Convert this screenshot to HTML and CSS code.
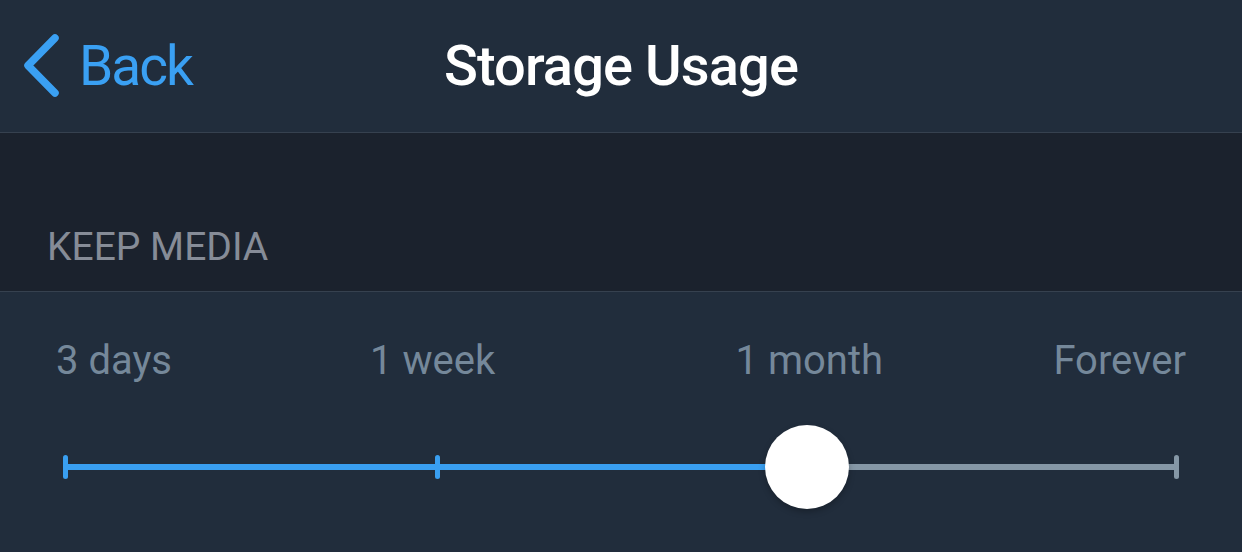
FILE: index.html
```html
<!DOCTYPE html>
<html>
<head>
<meta charset="utf-8">
<title>Storage Usage</title>
<link rel="stylesheet" href="styles.css">
</head>
<body>
<div class="screen">
  <header class="navbar">
    <a class="back" href="#">
      <svg class="chevron" width="40" height="66" viewBox="0 0 40 66" aria-hidden="true">
        <path d="M34 5 L7 32.5 L34 60" fill="none" stroke="#3aa0f3" stroke-width="7.5" stroke-linecap="round" stroke-linejoin="round"/>
      </svg>
      <span class="back-label">Back</span>
    </a>
    <h1 class="title">Storage Usage</h1>
    <div class="nav-right"></div>
  </header>
  <section class="section-header">
    <span class="section-title">KEEP MEDIA</span>
  </section>
  <section class="slider-cell">
    <div class="labels">
      <div class="label first"><span>3 days</span></div>
      <div class="label"><span>1 week</span></div>
      <div class="label"><span>1 month</span></div>
      <div class="label last"><span>Forever</span></div>
    </div>
    <div class="track">
      <span class="tick on"></span>
      <span class="seg on"></span>
      <span class="tick on"></span>
      <span class="seg on"></span>
      <span class="knob"><span class="thumb"></span></span>
      <span class="seg off"></span>
      <span class="tick off"></span>
    </div>
  </section>
</div>
</body>
</html>
```
FILE: styles.css
```css
* { box-sizing: border-box; }
html, body {
  margin: 0;
  padding: 0;
  background: #212d3c;
}
body {
  font-family: Roboto, "Noto Sans", "DejaVu Sans", sans-serif;
  width: 1242px;
  height: 552px;
  overflow: hidden;
}
.screen {
  display: flex;
  flex-direction: column;
  height: 552px;
}
.navbar {
  height: 133px;
  flex: none;
  display: grid;
  grid-template-columns: 1fr auto 1fr;
  align-items: center;
  background: #212d3c;
  border-bottom: 1px solid #36414f;
  padding-bottom: 1px;
}
.back {
  display: flex;
  align-items: center;
  gap: 18px;
  padding-left: 21px;
  text-decoration: none;
  color: #3aa0f3;
}
.chevron { display: block; }
.back-label {
  font-size: 55px;
  line-height: 64px;
  font-weight: 400;
  letter-spacing: -2px;
}
.title {
  margin: 0;
  font-size: 56px;
  line-height: 64px;
  font-weight: 500;
  color: #ffffff;
  letter-spacing: -0.9px;
}
.section-header {
  height: 159px;
  flex: none;
  background: #1b222d;
  border-bottom: 1px solid #36414f;
  display: flex;
  align-items: flex-end;
  padding: 0 0 20px 47px;
}
.section-title {
  font-size: 39px;
  line-height: 48px;
  color: #868c97;
}
.slider-cell {
  flex: 1;
  background: #212d3c;
  padding: 40px 63px 0 63px;
  display: flex;
  flex-direction: column;
}
.labels {
  display: flex;
  justify-content: space-between;
  padding: 0 2px;
  height: 56px;
  align-items: center;
}
.label {
  width: 0;
  display: flex;
  justify-content: center;
  white-space: nowrap;
  font-size: 40px;
  color: #75889a;
}
.label.first { justify-content: flex-start; margin-left: -9px; }
.label.last { justify-content: flex-end; margin-right: -9px; }
.track {
  margin-top: 67px;
  height: 24px;
  display: flex;
  align-items: center;
}
.tick {
  width: 5px;
  height: 24px;
  border-radius: 2.5px;
  flex: none;
}
.seg {
  flex: 1;
  height: 6px;
}
.on { background: #399ff1; }
.off { background: #8597a6; }
.knob {
  width: 0;
  height: 0;
  display: flex;
  justify-content: center;
  align-items: center;
  position: relative;
}
.thumb {
  flex: none;
  width: 84px;
  height: 84px;
  border-radius: 50%;
  background: #ffffff;
  box-shadow: 0 3px 6px rgba(0, 0, 0, 0.25);
}
```
